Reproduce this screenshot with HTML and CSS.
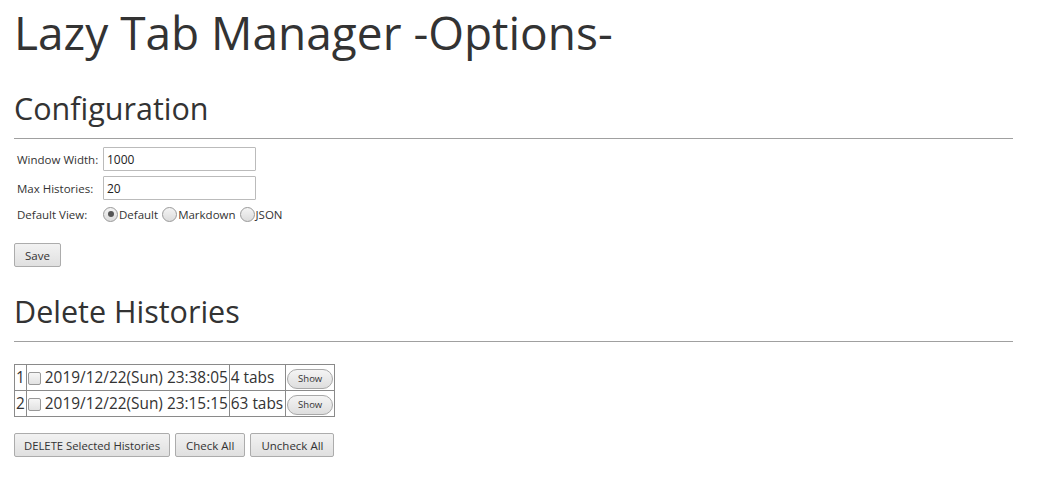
FILE: index.html
```html
<!DOCTYPE html>
<html>
<head>
<meta charset="utf-8">
<title>Lazy Tab Manager -Options-</title>
<link rel="stylesheet" href="styles.css">
</head>
<body>
<h1 class="title">Lazy Tab Manager -Options-</h1>

<h2 class="section">Configuration</h2>
<div class="config">
  <label class="lbl">Window Width:</label>
  <input class="field" type="text" value="1000">
  <label class="lbl">Max Histories:</label>
  <input class="field" type="text" value="20">
  <label class="lbl">Default View:</label>
  <div class="radios">
    <label class="radio"><span class="dot checked"></span>Default</label>
    <label class="radio"><span class="dot"></span>Markdown</label>
    <label class="radio"><span class="dot"></span>JSON</label>
  </div>
</div>
<div class="actions save-row">
  <button class="btn">Save</button>
</div>

<h2 class="section section-delete">Delete Histories</h2>
<table class="hist">
  <tr>
    <td>1</td>
    <td><span class="check"></span> 2019/12/22(Sun) 23:38:05</td>
    <td class="tabs">4 tabs</td>
    <td class="showcell"><button class="pill">Show</button></td>
  </tr>
  <tr>
    <td>2</td>
    <td><span class="check"></span> 2019/12/22(Sun) 23:15:15</td>
    <td class="tabs">63 tabs</td>
    <td class="showcell"><button class="pill">Show</button></td>
  </tr>
</table>
<div class="actions bottom-row">
  <button class="btn">DELETE Selected Histories</button>
  <button class="btn">Check All</button>
  <button class="btn">Uncheck All</button>
</div>
</body>
</html>
```
FILE: styles.css
```css
* { box-sizing: border-box; }
body {
  margin: 0;
  padding: 0 33px 0 14px;
  font-family: "Open Sans", "Noto Sans", sans-serif;
  color: #333;
  background: #fff;
}
.title {
  font-size: 46px;
  font-weight: 400;
  line-height: 56px;
  margin: 4px 0 0 0;
}
.section {
  font-size: 30.5px;
  font-weight: 400;
  line-height: 40px;
  margin: 28px 0 0 0;
  padding-bottom: 10px;
  border-bottom: 1px solid #a0a0a0;
}
.section-delete { margin-top: 24px; }
.config {
  display: grid;
  grid-template-columns: 86px auto;
  row-gap: 5px;
  margin-top: 8px;
  padding-left: 3px;
  align-items: center;
  justify-content: start;
  font-size: 11.5px;
}
.lbl { color: #333; }
.field {
  width: 153px;
  height: 24px;
  border: 1px solid #bbb;
  border-radius: 1px;
  padding: 0 3px;
  font: inherit;
  font-size: 12px;
  color: #222;
}
.radios { display: flex; align-items: center; height: 18px; }
.radio { display: flex; align-items: center; margin-right: 4px; }
.dot {
  width: 15px; height: 15px;
  border-radius: 50%;
  border: 1px solid #999;
  background: linear-gradient(#f4f4f4, #dcdcdc);
  margin-right: 1px;
  position: relative;
}
.dot.checked::after {
  content: "";
  position: absolute;
  left: 3.5px; top: 3.5px;
  width: 6px; height: 6px;
  border-radius: 50%;
  background: #555;
}
.actions { display: flex; gap: 5px; }
.save-row { margin-top: 20px; }
.btn {
  font-family: inherit;
  font-size: 11.5px;
  color: #333;
  height: 24px;
  padding: 0 10px;
  border: 1px solid #acacac;
  border-radius: 2px;
  background: linear-gradient(#f2f2f2, #e0e0e0);
}
.hist {
  border-collapse: collapse;
  margin-top: 22px;
  font-size: 15.4px;
}
.hist td {
  border: 1px solid #8a8a8a;
  padding: 0 1px;
  height: 26px;
  white-space: nowrap;
}
.check {
  display: inline-block;
  width: 13px; height: 13px;
  border: 1px solid #999;
  border-radius: 2px;
  background: linear-gradient(#f6f6f6, #e2e2e2);
  vertical-align: -2px;
}
.tabs { padding-right: 2px !important; }
.showcell { padding: 0 1px !important; }
.pill {
  font-family: inherit;
  font-size: 9.5px;
  color: #333;
  width: 46px;
  height: 20px;
  border: 1px solid #a8a8a8;
  border-radius: 10px;
  background: linear-gradient(#f4f4f4, #dedede);
  padding: 0;
}
.bottom-row { margin-top: 16px; }
.bottom-row .btn:first-child { padding: 0 9px; font-size: 11.3px; }
```
